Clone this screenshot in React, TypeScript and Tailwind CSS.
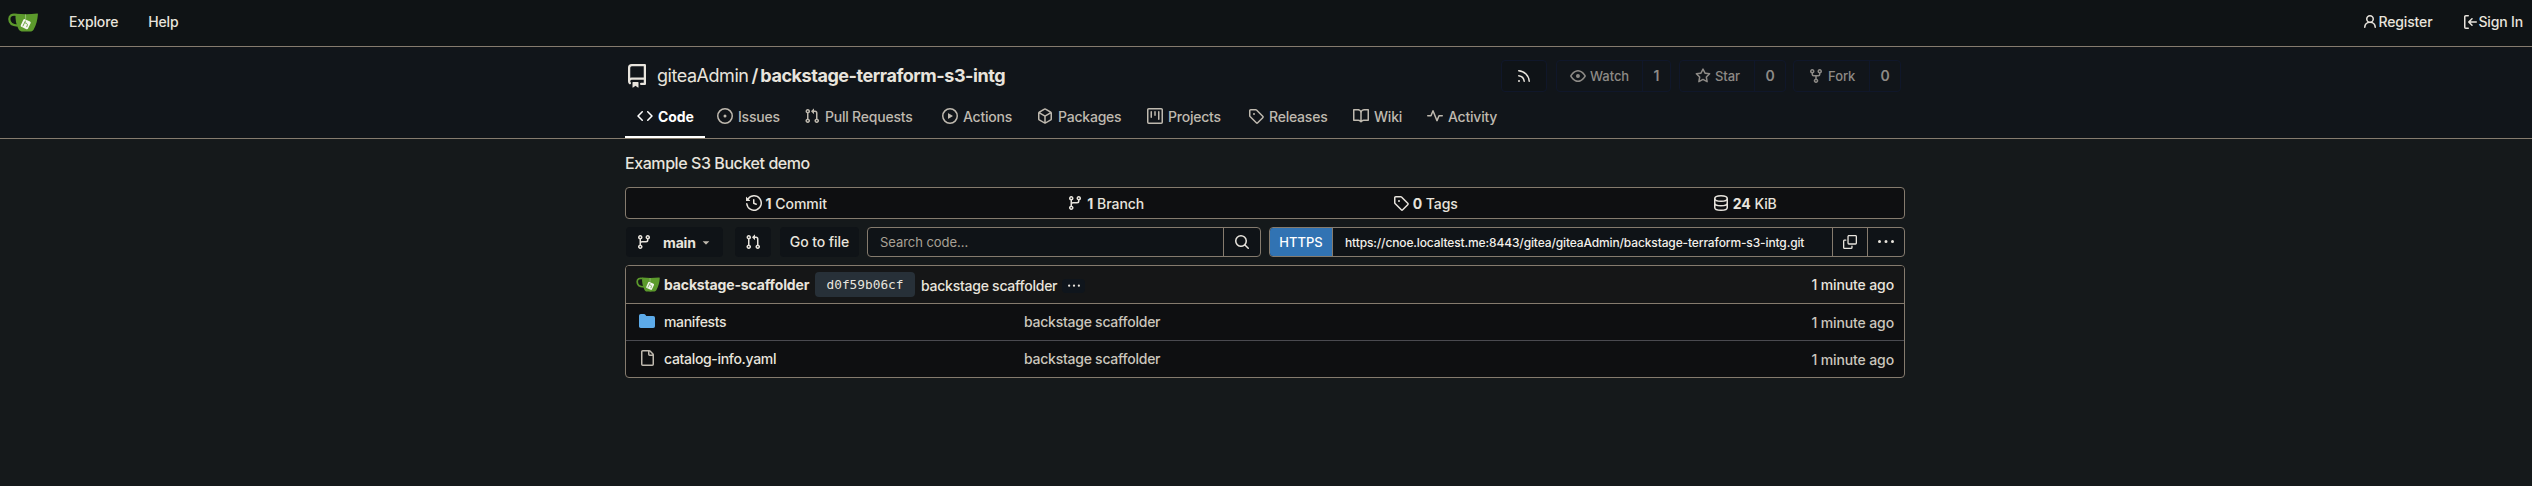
import type { ReactNode } from "react";

const PATHS = {
  repo: "M2 2.5A2.5 2.5 0 0 1 4.5 0h8.75a.75.75 0 0 1 .75.75v12.5a.75.75 0 0 1-.75.75h-2.5a.75.75 0 0 1 0-1.5h1.75v-2h-8a1 1 0 0 0-.714 1.7.75.75 0 1 1-1.072 1.05A2.495 2.495 0 0 1 2 11.5Zm10.5-1h-8a1 1 0 0 0-1 1v6.708A2.486 2.486 0 0 1 4.5 9h8ZM5 12.25a.25.25 0 0 1 .25-.25h3.5a.25.25 0 0 1 .25.25v3.25a.25.25 0 0 1-.4.2l-1.45-1.087a.249.249 0 0 0-.3 0L5.4 15.7a.25.25 0 0 1-.4-.2Z",
  code: "m11.28 3.22 4.25 4.25a.75.75 0 0 1 0 1.06l-4.25 4.25a.749.749 0 0 1-1.275-.326.749.749 0 0 1 .215-.734L13.94 8l-3.72-3.72a.749.749 0 0 1 .326-1.275.749.749 0 0 1 .734.215Zm-6.56 0a.751.751 0 0 1 1.042.018.751.751 0 0 1 .018 1.042L2.06 8l3.72 3.72a.749.749 0 0 1-.326 1.275.749.749 0 0 1-.734-.215L.47 8.53a.75.75 0 0 1 0-1.06Z",
  issue: "M8 9.5a1.5 1.5 0 1 0 0-3 1.5 1.5 0 0 0 0 3ZM8 0a8 8 0 1 1 0 16A8 8 0 0 1 8 0ZM1.5 8a6.5 6.5 0 1 0 13 0 6.5 6.5 0 0 0-13 0Z",
  pull: "M1.5 3.25a2.25 2.25 0 1 1 3 2.122v5.256a2.251 2.251 0 1 1-1.5 0V5.372A2.25 2.25 0 0 1 1.5 3.25Zm5.677-.177L9.573.677A.25.25 0 0 1 10 .854V2.5h1A2.5 2.5 0 0 1 13.5 5v5.628a2.251 2.251 0 1 1-1.5 0V5a1 1 0 0 0-1-1h-1v1.646a.25.25 0 0 1-.427.177L7.177 3.427a.25.25 0 0 1 0-.354ZM3.75 2.5a.75.75 0 1 0 0 1.5.75.75 0 0 0 0-1.5Zm0 9.5a.75.75 0 1 0 0 1.5.75.75 0 0 0 0-1.5Zm8.25.75a.75.75 0 1 0 1.5 0 .75.75 0 0 0-1.5 0Z",
  play: "M8 0a8 8 0 1 1 0 16A8 8 0 0 1 8 0ZM1.5 8a6.5 6.5 0 1 0 13 0 6.5 6.5 0 0 0-13 0Zm4.879-2.773 4.264 2.559a.25.25 0 0 1 0 .428l-4.264 2.559A.25.25 0 0 1 6 10.559V5.442a.25.25 0 0 1 .379-.215Z",
  pkg: "m8.878.392 5.25 3.045c.54.314.872.89.872 1.514v6.098a1.75 1.75 0 0 1-.872 1.514l-5.25 3.045a1.75 1.75 0 0 1-1.756 0l-5.25-3.045A1.75 1.75 0 0 1 1 11.049V4.951c0-.624.332-1.201.872-1.514L7.122.392a1.75 1.75 0 0 1 1.756 0ZM7.875 1.69l-4.63 2.685L8 7.133l4.755-2.758-4.63-2.685a.248.248 0 0 0-.25 0ZM2.5 5.677v5.372c0 .09.047.171.125.216l4.625 2.683V8.432Zm6.25 8.271 4.625-2.683a.25.25 0 0 0 .125-.216V5.677L8.75 8.432Z",
  project: "M1.75 0h12.5C15.216 0 16 .784 16 1.75v12.5A1.75 1.75 0 0 1 14.25 16H1.75A1.75 1.75 0 0 1 0 14.25V1.75C0 .784.784 0 1.75 0ZM1.5 1.75v12.5c0 .138.112.25.25.25h12.5a.25.25 0 0 0 .25-.25V1.75a.25.25 0 0 0-.25-.25H1.75a.25.25 0 0 0-.25.25ZM11.75 3a.75.75 0 0 1 .75.75v7.5a.75.75 0 0 1-1.5 0v-7.5a.75.75 0 0 1 .75-.75Zm-8.25.75a.75.75 0 0 1 1.5 0v5.5a.75.75 0 0 1-1.5 0ZM8 3a.75.75 0 0 1 .75.75v3.5a.75.75 0 0 1-1.5 0v-3.5A.75.75 0 0 1 8 3Z",
  tag: "M1 7.775V2.75C1 1.784 1.784 1 2.75 1h5.025c.464 0 .91.184 1.238.513l6.25 6.25a1.75 1.75 0 0 1 0 2.474l-5.026 5.026a1.75 1.75 0 0 1-2.474 0l-6.25-6.25A1.752 1.752 0 0 1 1 7.775Zm1.5 0c0 .066.026.13.073.177l6.25 6.25a.25.25 0 0 0 .354 0l5.025-5.025a.25.25 0 0 0 0-.354l-6.25-6.25a.25.25 0 0 0-.177-.073H2.75a.25.25 0 0 0-.25.25ZM6 5a1 1 0 1 1 0 2 1 1 0 0 1 0-2Z",
  book: "M0 1.75A.75.75 0 0 1 .75 1h4.253c1.227 0 2.317.59 3 1.501A3.743 3.743 0 0 1 11.006 1h4.245a.75.75 0 0 1 .75.75v10.5a.75.75 0 0 1-.75.75h-4.507a2.25 2.25 0 0 0-1.591.659l-.622.621a.75.75 0 0 1-1.06 0l-.622-.621A2.25 2.25 0 0 0 5.258 13H.75a.75.75 0 0 1-.75-.75Zm7.251 10.324.004-5.073-.002-2.253A2.25 2.25 0 0 0 5.003 2.5H1.5v9h3.757a3.75 3.75 0 0 1 1.994.574ZM8.755 4.75l-.004 7.322a3.752 3.752 0 0 1 1.992-.572H14.5v-9h-3.495a2.25 2.25 0 0 0-2.25 2.25Z",
  pulse: "M6 2c.306 0 .582.187.696.471L10 10.731l1.304-3.26A.751.751 0 0 1 12 7h3.25a.75.75 0 0 1 0 1.5h-2.742l-1.812 4.528a.751.751 0 0 1-1.392 0L6 4.77 4.696 8.03A.75.75 0 0 1 4 8.5H.75a.75.75 0 0 1 0-1.5h2.742l1.812-4.529A.751.751 0 0 1 6 2Z",
  rss: "M2.002 2.725a.75.75 0 0 1 .797-.699C8.79 2.42 13.58 7.21 13.974 13.201a.75.75 0 0 1-1.497.098 10.502 10.502 0 0 0-9.776-9.776.747.747 0 0 1-.7-.798ZM2.84 7.05h-.002a7.002 7.002 0 0 1 6.113 6.111.75.75 0 0 1-1.49.178 5.503 5.503 0 0 0-4.8-4.8.75.75 0 0 1 .179-1.489ZM2 13a1 1 0 1 1 2 0 1 1 0 0 1-2 0Z",
  eye: "M8 2c1.981 0 3.671.992 4.933 2.078 1.27 1.091 2.187 2.345 2.637 3.023a1.62 1.62 0 0 1 0 1.798c-.45.678-1.367 1.932-2.637 3.023C11.67 13.008 9.981 14 8 14c-1.981 0-3.671-.992-4.933-2.078C1.797 10.83.88 9.576.43 8.898a1.62 1.62 0 0 1 0-1.798c.45-.677 1.367-1.931 2.637-3.022C4.33 2.992 6.019 2 8 2ZM1.679 7.932a.12.12 0 0 0 0 .136c.411.622 1.241 1.75 2.366 2.717C5.176 11.758 6.527 12.5 8 12.5c1.473 0 2.825-.742 3.955-1.715 1.124-.967 1.954-2.096 2.366-2.717a.12.12 0 0 0 0-.136c-.412-.621-1.242-1.75-2.366-2.717C10.824 4.242 9.473 3.5 8 3.5c-1.473 0-2.825.742-3.955 1.715-1.124.967-1.954 2.096-2.366 2.717ZM8 10a2 2 0 1 1-.001-3.999A2 2 0 0 1 8 10Z",
  star: "M8 .25a.75.75 0 0 1 .673.418l1.882 3.815 4.21.612a.75.75 0 0 1 .416 1.279l-3.046 2.97.719 4.192a.751.751 0 0 1-1.088.791L8 12.347l-3.766 1.98a.75.75 0 0 1-1.088-.79l.72-4.194L.818 6.374a.75.75 0 0 1 .416-1.28l4.21-.611L7.327.668A.75.75 0 0 1 8 .25Zm0 2.445L6.615 5.5a.75.75 0 0 1-.564.41l-3.097.45 2.24 2.184a.75.75 0 0 1 .216.664l-.528 3.084 2.769-1.456a.75.75 0 0 1 .698 0l2.77 1.456-.53-3.084a.75.75 0 0 1 .216-.664l2.24-2.183-3.096-.45a.75.75 0 0 1-.564-.41L8 2.694Z",
  fork: "M5 5.372v.878c0 .414.336.75.75.75h4.5a.75.75 0 0 0 .75-.75v-.878a2.25 2.25 0 1 1 1.5 0v.878a2.25 2.25 0 0 1-2.25 2.25h-1.5v2.128a2.251 2.251 0 1 1-1.5 0V8.5h-1.5A2.25 2.25 0 0 1 3.5 6.25v-.878a2.25 2.25 0 1 1 1.5 0ZM5 3.25a.75.75 0 1 0-1.5 0 .75.75 0 0 0 1.5 0Zm6.75.75a.75.75 0 1 0 0-1.5.75.75 0 0 0 0 1.5Zm-3 8.75a.75.75 0 1 0-1.5 0 .75.75 0 0 0 1.5 0Z",
  history: "m.427 1.927 1.215 1.215a8.002 8.002 0 1 1-1.6 5.685.75.75 0 1 1 1.493-.154 6.5 6.5 0 1 0 1.18-4.458l1.358 1.358A.25.25 0 0 1 3.896 6H.25A.25.25 0 0 1 0 5.75V2.104a.25.25 0 0 1 .427-.177ZM7.75 4a.75.75 0 0 1 .75.75v2.992l2.028.812a.75.75 0 0 1-.557 1.392l-2.5-1A.751.751 0 0 1 7 8.25v-3.5A.75.75 0 0 1 7.75 4Z",
  branch: "M9.5 3.25a2.25 2.25 0 1 1 3 2.122V6A2.5 2.5 0 0 1 10 8.5H6a1 1 0 0 0-1 1v1.128a2.251 2.251 0 1 1-1.5 0V5.372a2.25 2.25 0 1 1 1.5 0v1.836A2.493 2.493 0 0 1 6 7h4a1 1 0 0 0 1-1v-.628A2.25 2.25 0 0 1 9.5 3.25Zm-6 0a.75.75 0 1 0 1.5 0 .75.75 0 0 0-1.5 0Zm8.25-.75a.75.75 0 1 0 0 1.5.75.75 0 0 0 0-1.5ZM4.25 12a.75.75 0 1 0 0 1.5.75.75 0 0 0 0-1.5Z",
  search: "M10.68 11.74a6 6 0 0 1-7.922-8.982 6 6 0 0 1 8.982 7.922l3.04 3.04a.749.749 0 0 1-.326 1.275.749.749 0 0 1-.734-.215ZM11.5 7a4.499 4.499 0 1 0-8.997 0A4.499 4.499 0 0 0 11.5 7Z",
  copy: "M0 6.75C0 5.784.784 5 1.75 5h1.5a.75.75 0 0 1 0 1.5h-1.5a.25.25 0 0 0-.25.25v7.5c0 .138.112.25.25.25h7.5a.25.25 0 0 0 .25-.25v-1.5a.75.75 0 0 1 1.5 0v1.5A1.75 1.75 0 0 1 9.25 16h-7.5A1.75 1.75 0 0 1 0 14.25ZM5 1.75C5 .784 5.784 0 6.75 0h7.5C15.216 0 16 .784 16 1.75v7.5A1.75 1.75 0 0 1 14.25 11h-7.5A1.75 1.75 0 0 1 5 9.25Zm1.75-.25a.25.25 0 0 0-.25.25v7.5c0 .138.112.25.25.25h7.5a.25.25 0 0 0 .25-.25v-7.5a.25.25 0 0 0-.25-.25Z",
  kebab: "M8 9a1.5 1.5 0 1 0 0-3 1.5 1.5 0 0 0 0 3ZM1.5 9a1.5 1.5 0 1 0 0-3 1.5 1.5 0 0 0 0 3Zm13 0a1.5 1.5 0 1 0 0-3 1.5 1.5 0 0 0 0 3Z",
  file: "M2 1.75C2 .784 2.784 0 3.75 0h6.586c.464 0 .909.184 1.237.513l2.914 2.914c.329.328.513.773.513 1.237v9.586A1.75 1.75 0 0 1 13.25 16h-9.5A1.75 1.75 0 0 1 2 14.25Zm1.75-.25a.25.25 0 0 0-.25.25v12.5c0 .138.112.25.25.25h9.5a.25.25 0 0 0 .25-.25V6h-2.75A1.75 1.75 0 0 1 9 4.25V1.5Zm6.75.062V4.25c0 .138.112.25.25.25h2.688l-.011-.013-2.914-2.914-.013-.011Z",
  folder: "M1.75 1A1.75 1.75 0 0 0 0 2.75v10.5C0 14.216.784 15 1.75 15h12.5A1.75 1.75 0 0 0 16 13.25v-8.5A1.75 1.75 0 0 0 14.25 3H7.5a.25.25 0 0 1-.2-.1l-.9-1.2C6.07 1.26 5.55 1 5 1H1.75Z",
  person: "M10.561 8.073a6.005 6.005 0 0 1 3.432 5.142.75.75 0 1 1-1.498.07 4.5 4.5 0 0 0-8.99 0 .75.75 0 0 1-1.498-.07 6.004 6.004 0 0 1 3.431-5.142 3.999 3.999 0 1 1 5.123 0ZM10.5 5a2.5 2.5 0 1 0-5 0 2.5 2.5 0 0 0 5 0Z",
  signIn: "M2 2.75C2 1.784 2.784 1 3.75 1h2.5a.75.75 0 0 1 0 1.5h-2.5a.25.25 0 0 0-.25.25v10.5c0 .138.112.25.25.25h2.5a.75.75 0 0 1 0 1.5h-2.5A1.75 1.75 0 0 1 2 13.25Zm6.56 4.5h5.69a.75.75 0 0 1 0 1.5H8.56l1.97 1.97a.749.749 0 0 1-.326 1.275.749.749 0 0 1-.734-.215L6.22 8.53a.75.75 0 0 1 0-1.06l3.25-3.25a.749.749 0 0 1 1.275.326.749.749 0 0 1-.215.734Z",
  caret: "m4.427 7.427 3.396 3.396a.25.25 0 0 0 .354 0l3.396-3.396A.25.25 0 0 0 11.396 7H4.604a.25.25 0 0 0-.177.427Z",
};

type IconName = keyof typeof PATHS;

function Icon({ name, className = "size-4" }: { name: IconName; className?: string }) {
  return (
    <svg viewBox="0 0 16 16" fill="currentColor" className={`shrink-0 ${className}`}>
      <path d={PATHS[name]} />
    </svg>
  );
}

function DatabaseIcon() {
  return (
    <svg viewBox="0 0 16 16" fill="none" stroke="currentColor" strokeWidth="1.5" className="size-4 shrink-0">
      <ellipse cx="8" cy="3.5" rx="6.25" ry="2.75" />
      <path d="M1.75 3.5v9c0 1.5 2.8 2.75 6.25 2.75s6.25-1.25 6.25-2.75v-9M1.75 8c0 1.5 2.8 2.75 6.25 2.75S14.25 9.5 14.25 8" />
    </svg>
  );
}

function TeaLogo({ className }: { className: string }) {
  return (
    <svg viewBox="0 0 30 19" className={`shrink-0 ${className}`}>
      <path d="M8.3 1.9C4.2.9 1.3 2.6 1.3 6c0 4 3 6.4 8.3 6.6" fill="none" stroke="#5c9a2c" strokeWidth="2.2" />
      <path
        d="M7.6.7C15 1.3 22 1.3 29.2.6c.6 0 .8.4.7 1-.3 5-1.7 10.6-4.2 14.8-.9 1.500-2 2-3.500 2-3 .3-5.800.2-8.700 0-1.400-.1-2.400-1-3-2.300C8.300 12 7 6 7.600.7Z"
        fill="#5c9a2c"
      />
      <path d="M17.6 1.4v4.5" stroke="#d6e5c8" strokeWidth=".5" />
      <rect x="13.7" y="7" width="8" height="8.4" rx="1.2" transform="rotate(25 17.7 11.2)" fill="#f4f6f0" />
      <path d="m17.6 7.6-2.8 5.7M17 9.8c2.6.8 3 1.4 1.6 4.3" fill="none" stroke="#5c9a2c" strokeWidth=".9" />
    </svg>
  );
}

const TABS: { icon: IconName; label: string; width: string }[] = [
  { icon: "issue", label: "Issues", width: "w-[87px]" },
  { icon: "pull", label: "Pull Requests", width: "w-[138px]" },
  { icon: "play", label: "Actions", width: "w-[95px]" },
  { icon: "pkg", label: "Packages", width: "w-[110px]" },
  { icon: "project", label: "Projects", width: "w-[101px]" },
  { icon: "tag", label: "Releases", width: "w-[105px]" },
  { icon: "book", label: "Wiki", width: "w-[74px]" },
  { icon: "pulse", label: "Activity", width: "w-[93px]" },
];

function CountButton({
  icon,
  label,
  count,
  main,
  side,
}: {
  icon: IconName;
  label: string;
  count: string;
  main: string;
  side: string;
}) {
  return (
    <div className="flex h-8 rounded border border-[#10172a] text-[#8d8a86]">
      <div className={`flex items-center gap-1 border-r border-[#10172a] text-[13px] tracking-[-0.05px] ${main}`}>
        <Icon name={icon} />
        <span>{label}</span>
      </div>
      <div className={`flex items-center justify-center font-semibold ${side}`}>{count}</div>
    </div>
  );
}

function Stat({ icon, count, label }: { icon: ReactNode; count: string; label: string }) {
  return (
    <div className="flex flex-1 items-center justify-center gap-1 pl-px">
      {icon}
      <span className="pt-0.5 tracking-[-0.05px]">
        <b className="font-bold">{count}</b> {label}
      </span>
    </div>
  );
}

function FileRow({ icon, name, className }: { icon: ReactNode; name: ReactNode; className: string }) {
  return (
    <div className={`flex items-center pr-[10px] pl-[13px] ${className}`}>
      {icon}
      <span className="ml-[9px] w-[360px] tracking-[-0.32px]">{name}</span>
      <span className="flex-1 tracking-[-0.25px] text-[#cbc6bd]">backstage scaffolder</span>
      <span className="pt-0.5 tracking-[-0.12px] text-[#cbc6bd]">1 minute ago</span>
    </div>
  );
}

export default function App() {
  return (
    <div className="h-[486px] w-[2532px] overflow-hidden bg-[#15191b] font-['Inter',sans-serif] text-sm leading-5 font-medium text-[#e8e4dd]">
      <nav className="flex h-[47px] items-center border-b border-[#857b6e] bg-[#0f1315] pr-[9px] pb-px pl-2 tracking-[-0.15px]">
        <TeaLogo className="h-[19px] w-[30px]" />
        <a className="ml-[31px] pb-px">Explore</a>
        <a className="ml-[30px] pb-px">Help</a>
        <div className="ml-auto flex items-center gap-[30px] pb-px">
          <a className="flex items-center">
            <Icon name="person" />
            Register
          </a>
          <a className="flex items-center">
            <Icon name="signIn" />
            Sign In
          </a>
        </div>
      </nav>

      <header className="h-[92px] border-b border-[#857b6e] bg-[#11151a] px-[625px] pt-[13px]">
        <div className="flex h-8 items-center pr-1.5">
          <Icon name="repo" className="size-6" />
          <div className="ml-2 flex items-center text-lg">
            <span className="font-normal tracking-[-0.46px]">giteaAdmin</span>
            <span className="mr-[2px] ml-[3px] font-semibold">/</span>
            <span className="font-bold tracking-[-0.45px]">backstage-terraform-s3-intg</span>
          </div>
          <div className="ml-auto flex items-center">
            <div className="mr-[9px] flex h-8 w-[46px] items-center justify-center rounded border border-[#10172a] bg-[#0f1317]">
              <Icon name="rss" />
            </div>
            <CountButton icon="eye" label="Watch" count="1" main="w-[86px] pl-[13px]" side="w-[27px]" />
            <div className="w-2" />
            <CountButton icon="star" label="Star" count="0" main="w-[75px] pl-[15px]" side="w-[30px]" />
            <div className="w-[7px]" />
            <CountButton icon="fork" label="Fork" count="0" main="w-[76px] pl-[14px]" side="w-[30px]" />
          </div>
        </div>
        <div className="mt-[7px] flex h-[39px] text-[#bfb9af]">
          <div className="flex w-20 items-center gap-[5px] border-b-2 border-white pb-[3px] pl-3 font-bold tracking-[-0.1px] text-white">
            <Icon name="code" />
            <span className="pt-0.5">Code</span>
          </div>
          {TABS.map((t) => (
            <div key={t.label} className={`flex items-center gap-[5px] pb-[5px] pl-3 tracking-[-0.22px] ${t.width}`}>
              <Icon name={t.icon} />
              <span className="pt-0.5 whitespace-nowrap">{t.label}</span>
            </div>
          ))}
        </div>
      </header>

      <main className="mx-[625px] w-[1280px]">
        <p className="pt-3 text-base leading-6 tracking-[-0.43px]">Example S3 Bucket demo</p>

        <div className="mt-3 flex h-8 rounded border border-[#857b6e] bg-[#0e0f11]">
          <Stat icon={<Icon name="history" />} count="1" label="Commit" />
          <Stat icon={<Icon name="branch" />} count="1" label="Branch" />
          <Stat icon={<Icon name="tag" />} count="0" label="Tags" />
          <Stat icon={<DatabaseIcon />} count="24" label="KiB" />
        </div>

        <div className="mt-2 flex h-[30px]">
          <div className="ml-px flex w-[97px] items-center rounded bg-[#0f1317] pl-[10px]">
            <Icon name="branch" />
            <span className="ml-[11px] pt-px font-bold tracking-[-0.15px]">main</span>
            <Icon name="caret" className="ml-[3px] size-[14px] text-[#bfb9af]" />
          </div>
          <div className="ml-3 flex w-9 items-center justify-center rounded bg-[#0f1317]">
            <Icon name="pull" />
          </div>
          <div className="ml-[9px] flex w-[79px] items-center justify-center rounded bg-[#0f1317] tracking-[-0.08px]">
            Go to file
          </div>
          <div className="ml-2 flex w-[394px] rounded border border-[#857b6e] bg-[#0f1317]">
            <div className="flex flex-1 items-center pl-3 text-[13px] font-normal tracking-[-0.05px] text-[#a8a195]">
              Search code...
            </div>
            <div className="flex w-[37px] items-center justify-center border-l border-[#857b6e]">
              <Icon name="search" />
            </div>
          </div>
          <div className="ml-2 flex w-[636px] overflow-hidden rounded border border-[#857b6e] bg-[#0f1317]">
            <div className="flex w-[62px] items-center justify-center bg-[#3173b3] text-[13px] text-white">HTTPS</div>
            <div className="flex flex-1 items-center border-l border-[#857b6e] pt-px pl-3 text-xs tracking-[-0.13px] text-[#f2efea]">
              https://cnoe.localtest.me:8443/gitea/giteaAdmin/backstage-terraform-s3-intg.git
            </div>
            <div className="flex w-[35px] items-center justify-center border-l border-[#857b6e]">
              <Icon name="copy" className="size-[14px]" />
            </div>
            <div className="flex w-[37px] items-center justify-center border-l border-[#857b6e]">
              <Icon name="kebab" />
            </div>
          </div>
        </div>

        <div className="mt-2 overflow-hidden rounded border border-[#857b6e] bg-[#0e0f11]">
          <div className="flex h-[38px] items-center border-b border-[#857b6e] bg-[#151617] px-[10px]">
            <TeaLogo className="h-[15px] w-6" />
            <span className="ml-1 w-[145px] font-bold tracking-[-0.15px] whitespace-nowrap">backstage-scaffolder</span>
            <span className="ml-1.5 flex h-[25px] w-[100px] items-center justify-center rounded bg-[#273038] font-['DejaVu_Sans_Mono',monospace] text-[12.8px] font-normal">
              d0f59b06cf
            </span>
            <span className="ml-1.5 pt-0.5 tracking-[-0.25px]">backstage scaffolder</span>
            <span className="mt-0.5 ml-[5px] flex h-[14px] w-[23px] items-center justify-center rounded-sm bg-[#0f151c]">
              <Icon name="kebab" className="size-3" />
            </span>
            <span className="ml-auto tracking-[-0.12px]">1 minute ago</span>
          </div>
          <FileRow
            icon={<Icon name="folder" className="mb-0.5 size-4 text-[#5dabea]" />}
            name="manifests"
            className="h-[37px] border-b border-[#4a4a50]"
          />
          <FileRow
            icon={<Icon name="file" className="mb-0.5 size-4 text-[#bfb9af]" />}
            name="catalog-info.yaml"
            className="h-9"
          />
        </div>
      </main>
    </div>
  );
}
